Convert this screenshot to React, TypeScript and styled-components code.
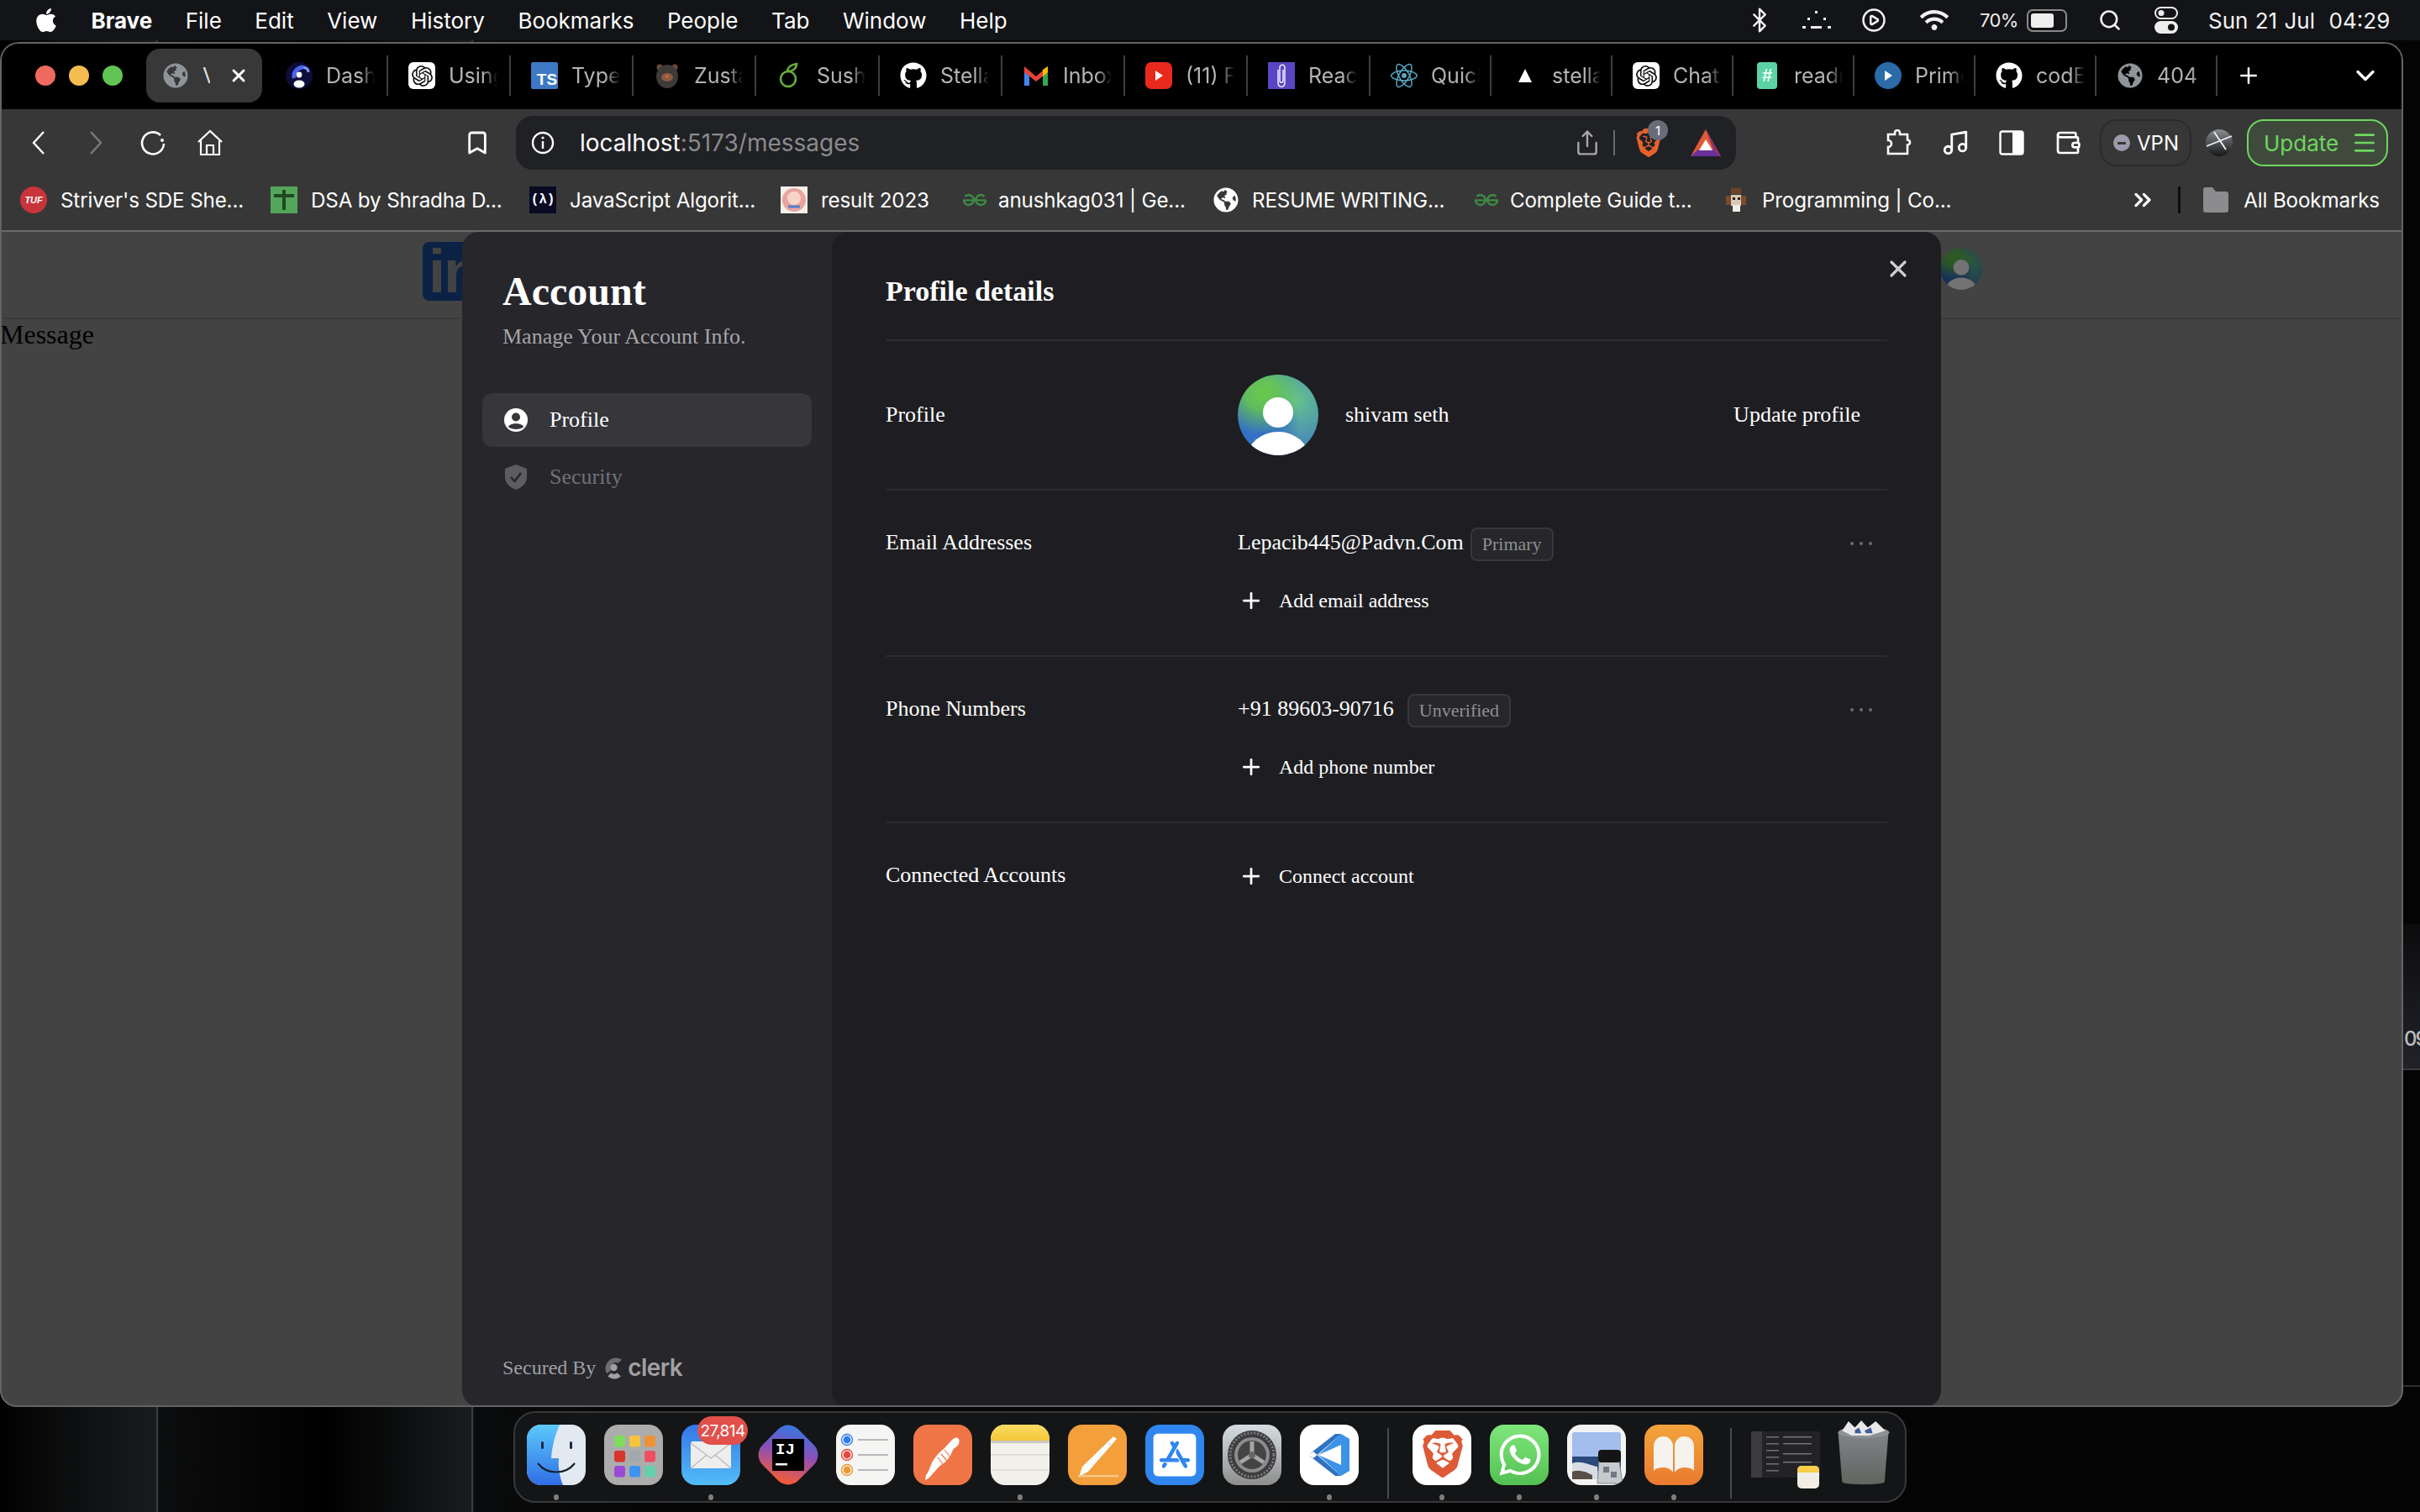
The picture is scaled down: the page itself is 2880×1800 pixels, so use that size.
import React from 'react';
import styled, { createGlobalStyle } from 'styled-components';
import { Bookmark, Share, Music, Wallet, Search, Bluetooth, CirclePlay, X, Plus, ChevronsRight, ChevronDown, Menu as MenuIcon } from 'lucide-react';
import { FaApple, FaGithub, FaGlobeAmericas, FaWifi, FaWhatsapp, FaAppStoreIos } from 'react-icons/fa';
import { SiBrave, SiOpenai, SiReact, SiGeeksforgeeks } from 'react-icons/si';

const sans = `Inter, "Liberation Sans", sans-serif`;
const serif = `"Liberation Serif", "Times New Roman", serif`;

const Global = createGlobalStyle`
  html, body { margin: 0; padding: 0; background: #000; width: 2880px; height: 1800px; overflow: hidden; }
  * { box-sizing: border-box; }
`;

const Desktop = styled.div`
  position: relative; width: 2880px; height: 1800px; overflow: hidden;
  display: flex; flex-direction: column; font-family: ${sans}; color: #fff;
  background:
    linear-gradient(90deg, transparent 186px, #3b3c3f 186px, #3b3c3f 188px, transparent 188px),
    linear-gradient(90deg, transparent 561px, #3b3c3f 561px, #3b3c3f 563px, transparent 563px),
    linear-gradient(90deg, #000 0, #0e0f10 90px, #191b1e 186px, #0c0d0e 190px, #000 390px, #0c0d0e 470px, #1a1c1f 561px, #0a0b0c 566px, #060606 800px, #040404 100%);
`;

const BehindStrip = styled.div`
  position: absolute; right: 0; top: 1100px; width: 22px; height: 174px; overflow: hidden;
  background: linear-gradient(180deg, #0c0c0e, #212329); border-bottom: 2px solid #3a3b3e;
  font-size: 24px; font-weight: 500; color: #bdbdbd; padding: 119px 0 0 3px; line-height: 36px; letter-spacing: -2px;
`;
const BehindLine = styled.div`
  position: absolute; right: 0; top: 1649px; width: 22px; height: 2px; background: #2b2c30;
`;

/* menu bar */
const MenuBar = styled.header`
  height: 48px; flex: none; display: flex; align-items: center; justify-content: space-between;
  background: #131417; padding: 0 37px 0 41px; font-size: 26px; position: relative;
`;
const MenuLeft = styled.nav`
  display: flex; align-items: center; gap: 39.5px;
`;
const AppleSlot = styled.span`
  display: flex; width: 28px; color: #fff;
`;
const MenuItem = styled.span<{ $bold?: boolean }>`
  font-weight: ${p => (p.$bold ? 700 : 400)}; white-space: nowrap;
`;
const StatusGroup = styled.div`
  display: flex; align-items: center;
`;
const Slot = styled.span<{ $w: number }>`
  width: ${p => p.$w}px; display: flex; justify-content: center; align-items: center; color: #f2f2f2;
`;
const Percent = styled.span`
  font-size: 22px; width: 46px; margin-left: 17px; white-space: nowrap; color: #eee; letter-spacing: -0.6px;
`;
const Battery = styled.span`
  width: 48px; height: 27px; margin-left: 10px; margin-right: 18px; border: 2px solid #8a8a8a; border-radius: 7px; padding: 3px; display: flex;
  i { display: block; width: 70%; background: #eee; border-radius: 3px; }
`;
const DateText = styled.span`
  margin-left: 16px; white-space: nowrap; font-size: 26px; width: 215px; word-spacing: 1px; color: #f2f2f2;
`;

/* window */
const BrowserWindow = styled.main`
  position: relative; margin-top: 2px; width: 2860px; height: 1625px; flex: none; overflow: hidden;
  border-radius: 22px 22px 20px 20px; display: flex; flex-direction: column; background: #434343;
  &::after { content: ''; position: absolute; inset: 0; border: 2px solid #646464; border-radius: inherit; pointer-events: none; z-index: 5; }
`;

const TabStrip = styled.div`
  height: 80px; flex: none; background: #000; display: flex; align-items: center; padding-left: 42px;
`;
const Light = styled.span<{ $c: string }>`
  width: 24px; height: 24px; border-radius: 50%; background: ${p => p.$c}; margin-right: 16px; flex: none;
`;
const ActiveTab = styled.div`
  width: 138px; height: 64px; margin-left: 12px; margin-right: 4px; flex: none; background: #383838; border-radius: 16px;
  display: flex; align-items: center; padding-left: 20px; color: #9aa0a6;
`;
const ActiveTitle = styled.span`
  width: 9px; overflow: hidden; margin-left: 17px; font-size: 25px; color: #ddd; white-space: nowrap;
`;
const ActiveClose = styled.span`
  display: flex; margin-left: 22px; color: #fff;
`;
const Tab = styled.div<{ $w: number }>`
  width: ${p => p.$w}px; height: 48px; flex: none; display: flex; align-items: center; padding-left: 24px;
`;
const Favicon = styled.span<{ $bg?: string; $fg?: string; $r?: number }>`
  width: 32px; height: 32px; flex: none; display: flex; align-items: center; justify-content: center; overflow: hidden;
  background: ${p => p.$bg || 'transparent'}; color: ${p => p.$fg || '#fff'}; border-radius: ${p => p.$r ?? 0}px;
`;
const TabTitle = styled.span`
  margin-left: 16px; width: 58px; overflow: hidden; white-space: nowrap; font-size: 25px; color: #b4b4b4;
  -webkit-mask-image: linear-gradient(90deg, #000 70%, transparent 100%);
  mask-image: linear-gradient(90deg, #000 70%, transparent 100%);
`;
const TabSep = styled.i`
  width: 2px; height: 48px; background: #3e3e3e; margin-left: auto; flex: none;
`;
const StripAction = styled.span<{ $ml: number }>`
  display: flex; margin-left: ${p => p.$ml}px; color: #fff;
`;

const Toolbar = styled.div`
  height: 72px; flex: none; background: #373737; padding: 8px 0 0 12px; display: flex; align-items: center;
`;
const ToolBtn = styled.span<{ $w?: number; $ml?: number; $dim?: boolean }>`
  width: ${p => p.$w ?? 68}px; margin-left: ${p => p.$ml ?? 0}px; height: 64px; flex: none;
  display: flex; align-items: center; justify-content: center; color: ${p => (p.$dim ? '#7c7c7c' : '#fff')};
`;
const UrlBar = styled.div`
  width: 1452px; height: 64px; margin-left: 12px; flex: none; background: #202125; border-radius: 20px;
  display: flex; align-items: center; padding-left: 18px; position: relative;
`;
const UrlText = styled.span`
  margin-left: 30px; font-size: 28px; color: #8a8a8c; white-space: nowrap;
  b { font-weight: 400; color: #fff; }
`;
const UrlActions = styled.span`
  margin-left: auto; display: flex; align-items: center; color: #a8a8a8;
`;
const UrlDivider = styled.i`
  width: 2px; height: 30px; background: #6a6a6a; margin: 0 22px 0 15px;
`;
const ShieldWrap = styled.span`
  position: relative; display: flex; width: 36px; justify-content: center; margin-right: 32px;
`;
const ShieldBadge = styled.span`
  position: absolute; left: 17px; top: -10px; width: 24px; height: 24px; border-radius: 50%; background: #6a6b78;
  color: #fff; font-size: 15px; display: flex; align-items: center; justify-content: center;
`;
const BatWrap = styled.span`
  display: flex; margin-right: 18px;
`;
const VpnPill = styled.span`
  width: 109px; height: 56px; margin-left: 5px; flex: none; border: 2px solid #2b2b2b; border-radius: 20px;
  display: flex; align-items: center; padding-left: 14px; gap: 8px; font-size: 24px; color: #fff;
`;
const VpnDot = styled.i`
  width: 20px; height: 20px; border-radius: 50%; background: #9b9bab; display: flex; align-items: center; justify-content: center;
  &::after { content: ''; width: 10px; height: 3px; background: #373737; }
`;
const UpdateBtn = styled.span`
  width: 168px; height: 56px; flex: none; border: 2px solid #6fd65f; border-radius: 20px; background: #3f4a3d;
  display: flex; align-items: center; justify-content: space-between; padding: 0 10px 0 18px; color: #6fd65f; font-size: 26px;
`;

const BookmarkBar = styled.div`
  height: 74px; flex: none; background: #373737; border-bottom: 2px solid #6a6a6a; display: flex; align-items: center;
  padding: 0 28px 0 24px; gap: 34px;
`;
const BookmarkItem = styled.span<{ $w: number; $gap: number }>`
  display: flex; align-items: center; gap: ${p => p.$gap}px; flex: none; width: ${p => p.$w}px;
  font-size: 24.2px; white-space: nowrap; color: #fff; letter-spacing: -0.15px;
`;
const BookmarkEnd = styled.span`
  margin-left: auto; display: flex; align-items: center; font-size: 24.2px; white-space: nowrap; color: #fff; letter-spacing: -0.15px;
`;
const BlackDivider = styled.i`
  width: 3px; height: 32px; background: #0d0d0d; margin: 0 27px 0 26px;
`;
const FolderWrap = styled.span`
  display: flex; margin-right: 18px;
`;

/* page */
const Content = styled.div`
  position: relative; flex: 1; background: #434343; min-height: 0;
`;
const PageHeader = styled.div`
  height: 104px; border-bottom: 2px solid #3a3a3a; display: flex; justify-content: space-between; align-items: flex-start;
  padding: 12px 501px 0 503px;
`;
const LinkedIn = styled.div`
  width: 70px; height: 70px; background: #0b2245; border-radius: 8px; color: #434343; font: 700 72px/70px "Liberation Sans", sans-serif;
  padding-left: 7px; overflow: hidden; letter-spacing: -2px;
`;
const PageText = styled.div`
  font-family: ${serif}; font-size: 32px; line-height: 37px; color: #000;
`;

const Modal = styled.section`
  position: absolute; left: 550px; top: 0; bottom: 0; width: 1760px; display: grid; grid-template-columns: 440px 1fr;
  background: #26262b; border-radius: 20px; overflow: hidden; font-family: ${serif}; z-index: 2; color: #fff;
`;
const Sidebar = styled.aside`
  display: flex; flex-direction: column; padding-top: 43px;
`;
const SideTitle = styled.h1`
  margin: 0 0 8px 48px; font-size: 48px; line-height: 56px; font-weight: 700;
`;
const SideSub = styled.p`
  margin: 0 0 49px 48px; font-size: 26px; line-height: 36px; color: #a5a5a8;
`;
const NavItem = styled.div<{ $active?: boolean }>`
  margin: 0 24px 4px; height: 64px; border-radius: 12px; display: flex; align-items: center; gap: 26px; padding-left: 26px;
  font-size: 26px; background: ${p => (p.$active ? '#36363b' : 'transparent')}; color: ${p => (p.$active ? '#fff' : '#727276')};
`;
const SideFooter = styled.div`
  margin-top: auto; padding: 0 0 29px 48px; display: flex; align-items: center; font-size: 24px; line-height: 36px; color: #a0a0a3;
`;
const ClerkMark = styled.span`
  display: flex; margin-left: 9px; margin-right: 4px;
`;
const ClerkWord = styled.span`
  font: 600 28px/36px ${sans}; color: #a0a0a3; letter-spacing: -0.6px;
`;

const MainPanel = styled.div`
  background: #1e1e22; border-radius: 20px; padding: 49px 64px 0; position: relative;
`;
const CloseBtn = styled.span`
  position: absolute; top: 28px; right: 35px; display: flex; color: #cfcfcf;
`;
const PanelTitle = styled.h2`
  margin: 0; font-size: 34px; line-height: 44px; font-weight: 700; padding-bottom: 35px; border-bottom: 2px solid #2c2c30;
`;
const Row = styled.div<{ $top: number; $h: number; $last?: boolean }>`
  display: grid; grid-template-columns: 419px 1fr; height: ${p => p.$h}px; padding-top: ${p => p.$top}px;
  border-bottom: ${p => (p.$last ? 'none' : '2px solid #2c2c30')};
`;
const RowLabel = styled.div<{ $mt?: number }>`
  font-size: 26px; line-height: 36px; margin-top: ${p => p.$mt ?? 0}px;
`;
const ProfileValue = styled.div`
  display: flex; align-items: flex-start;
`;
const Avatar = styled.div<{ $size: number; $dim?: boolean }>`
  width: ${p => p.$size}px; height: ${p => p.$size}px; border-radius: 50%; overflow: hidden; flex: none;
  margin-top: ${p => (p.$dim ? 7 : 0)}px; filter: ${p => (p.$dim ? 'brightness(.45)' : 'none')};
  background:
    radial-gradient(circle at 30% 25%, #68c94a 0, rgba(104,201,74,.85) 18%, rgba(104,201,74,0) 48%),
    radial-gradient(circle at 22% 65%, #3470c4 0, #3470c4 22%, rgba(52,112,196,0) 55%),
    radial-gradient(circle at 72% 32%, #65c38d 0, rgba(101,195,141,0) 50%),
    #4b8fb4;
  svg { display: block; width: 100%; height: 100%; }
`;
const ProfileName = styled.div`
  margin-left: 32px; font-size: 26px; line-height: 96px;
`;
const UpdateLink = styled.div`
  margin-left: auto; margin-right: 32px; font-size: 26px; line-height: 96px;
`;
const ValueLine = styled.div`
  display: flex; align-items: flex-start; position: relative;
`;
const ValueText = styled.span`
  font-size: 26px; line-height: 36px; white-space: nowrap;
`;
const Badge = styled.span<{ $ml: number }>`
  margin-left: ${p => p.$ml}px; height: 40px; padding: 0 12px; display: flex; align-items: center; font-size: 22px; color: #8f8f93;
  border: 2px solid #38383c; border-radius: 8px; background: #27272b; white-space: nowrap;
`;
const Dots = styled.span`
  margin-left: auto; margin-right: 18px; margin-top: 17px; display: flex; gap: 7px;
  i { width: 4px; height: 4px; border-radius: 50%; background: #6d6d71; }
`;
const AddRow = styled.div<{ $mt: number }>`
  display: flex; align-items: center; height: 44px; margin-top: ${p => p.$mt}px; padding-left: 1px; gap: 18px; font-size: 24px; white-space: nowrap;
`;

/* dock */
const Dock = styled.footer`
  align-self: center; margin-top: 5px; height: 109px; width: 1658px; flex: none; display: flex; align-items: flex-start; position: relative; z-index: 3;
  padding: 14px 0 0 14px; gap: 22px; border: 2px solid #37383a; border-radius: 26px; background: #141516;
`;
const DockItem = styled.div<{ $w?: number; $ml?: number }>`
  width: ${p => p.$w ?? 70}px; margin-left: ${p => p.$ml ?? 0}px; flex: none; display: flex; flex-direction: column; align-items: center; position: relative;
  svg { display: block; }
`;
const DockDot = styled.i`
  width: 6px; height: 7px; border-radius: 50%; background: #7d7d7d; margin-top: 11px;
`;
const DockSep = styled.i<{ $r: number; $l: number }>`
  width: 2px; height: 84px; background: #4a4a4c; margin: 4px ${p => p.$r}px 0 ${p => p.$l}px; flex: none;
`;
const MailBadge = styled.span`
  position: absolute; left: 19px; top: -10px; width: 60px; height: 34px; border-radius: 17px; background: #e1504a; color: #fff;
  font-size: 19px; display: flex; align-items: center; justify-content: center; letter-spacing: -0.6px;
`;
const TsText = styled.span`
  font: 700 19px/1 "Liberation Sans", sans-serif; color: #fff; margin: 9px 0 0 6px;
`;
const ReadmeText = styled.span`
  width: 24px; height: 32px; background: #5bd3a4; border-radius: 4px; color: #e8fff4; font: 700 22px/32px "Liberation Sans", sans-serif; text-align: center;
`;
const TufText = styled.span`
  font: italic 700 11px/1 "Liberation Sans", sans-serif; color: #fff;
`;
const FccText = styled.span`
  font: 700 16px/1 "Liberation Mono", monospace; color: #fff;
`;

const Tile = ({ children, bg = '#fff', defs }: { children?: React.ReactNode; bg?: string; defs?: React.ReactNode }) => (
  <svg width="70" height="72" viewBox="0 0 70 72">
    {defs && <defs>{defs}</defs>}
    <clipPath id="tc"><rect width="70" height="72" rx="17" /></clipPath>
    <g clipPath="url(#tc)">
      <rect width="70" height="72" fill={bg} />
      {children}
    </g>
  </svg>
);

const Finder = () => (
  <Tile bg="#e3e9f1" defs={<linearGradient id="fb" x1="0" y1="0" x2="0" y2="1"><stop offset="0" stopColor="#5cc9fb" /><stop offset="1" stopColor="#2f6ee6" /></linearGradient>}>
    <path d="M0 0H39C33 14 30 26 29 40H38C37 50 39 62 43 72H0Z" fill="url(#fb)" />
    <rect x="17" y="20" width="3" height="9" rx="1.5" fill="#1d2a44" /><rect x="51" y="20" width="3" height="9" rx="1.5" fill="#1d2a44" />
    <path d="M13 46C24 60 46 60 57 46" stroke="#16202e" strokeWidth="2.2" fill="none" />
  </Tile>
);
const Launchpad = () => {
  const c = ['#7fdc5a', '#f6c33c', '#ee9233', '#d8352b', '#a3a8ac', '#ee4f63', '#9a4ad6', '#3d93f2', '#63d0ac'];
  return (
    <Tile bg="#acacac">
      {c.map((f, i) => <rect key={f} x={12 + (i % 3) * 18} y={13 + Math.floor(i / 3) * 18} width="13" height="13.5" rx="3" fill={f} />)}
    </Tile>
  );
};
const Mail = () => (
  <Tile defs={<linearGradient id="mb" x1="0" y1="0" x2="0" y2="1"><stop offset="0" stopColor="#3477e8" /><stop offset="1" stopColor="#52bdf7" /></linearGradient>} bg="url(#mb)">
    <rect x="11" y="20" width="48" height="32" rx="2.5" fill="#eeeeee" />
    <path d="M11 22L35 40L59 22M11 52L30 36M59 52L40 36" stroke="#b9b9b9" strokeWidth="1.2" fill="none" />
  </Tile>
);
const Idea = () => (
  <svg width="78" height="78" viewBox="0 0 78 78" style={{ marginTop: -3 }}>
    <defs><linearGradient id="ij" x1="0.1" y1="0" x2="0.7" y2="1"><stop offset="0" stopColor="#2d7be8" /><stop offset="0.5" stopColor="#8a4fb8" /><stop offset="1" stopColor="#f25b3a" /></linearGradient></defs>
    <rect x="9" y="9" width="60" height="60" rx="17" fill="url(#ij)" transform="rotate(45 39 39)" />
    <rect x="20" y="20" width="38" height="38" fill="#000" />
    <text x="24" y="38" fontFamily='"Liberation Mono", monospace' fontWeight="700" fontSize="19" fill="#fff">IJ</text>
    <rect x="24" y="49" width="14" height="2.5" fill="#fff" />
  </svg>
);
const Reminders = () => (
  <Tile bg="#f5f5f3">
    {[['#2f7cf0', 17], ['#e5483d', 35], ['#ea9a30', 53]].map(([c, y]) => (
      <g key={String(c)}>
        <circle cx="13" cy={Number(y) + 1} r="6.5" fill="none" stroke={String(c)} strokeWidth="1.4" /><circle cx="13" cy={Number(y) + 1} r="4.4" fill={String(c)} />
        <rect x="26" y={Number(y)} width="36" height="2" fill="#b9b9bb" />
      </g>
    ))}
  </Tile>
);
const Postman = () => (
  <Tile bg="#ef7547">
    <path d="M49 16C53 14 56 18 54 23C52 27 49 27 47 30C44 38 40 44 33 48C28 52 24 58 18 64L14 66L15 60C19 56 20 48 24 42C28 36 32 32 37 28C41 24 44 19 49 16Z" fill="#fff" />
    <path d="M37 30L44 39M33 35L40 43M29 39L35 47" stroke="#ef7547" strokeWidth="1.2" />
  </Tile>
);
const Notes = () => (
  <Tile bg="#f1f0ea" defs={<linearGradient id="nb" x1="0" y1="0" x2="0" y2="1"><stop offset="0" stopColor="#f9dc62" /><stop offset="1" stopColor="#f5c73b" /></linearGradient>}>
    <rect width="70" height="19" fill="url(#nb)" />
    <rect y="19" width="70" height="3" fill="#c9c8c1" />
    <rect y="35" width="70" height="1.6" fill="#dbdad4" /><rect y="53" width="70" height="1.6" fill="#dbdad4" />
  </Tile>
);
const Pages = () => (
  <Tile bg="#f29f3c">
    <path d="M54 14L58 17L24 56L13 62L17 50Z" fill="#fbfbf8" />
    <path d="M48 22L52 25" stroke="#d9d9d4" strokeWidth="1.5" />
    <rect x="12" y="60" width="48" height="2.4" fill="#f8c88c" />
  </Tile>
);
const AppStore = () => (
  <Tile bg="#2f86ee"><foreignObject x="6" y="7" width="58" height="58"><FaAppStoreIos size={58} color="#fff" /></foreignObject></Tile>
);
const Settings = () => (
  <Tile defs={<linearGradient id="sb" x1="0" y1="0" x2="0" y2="1"><stop offset="0" stopColor="#d5dde1" /><stop offset="1" stopColor="#8e8e8e" /></linearGradient>} bg="url(#sb)">
    <circle cx="35" cy="36" r="29" fill="#3d3d3f" /><circle cx="35" cy="36" r="21" fill="#8d8d90" /><circle cx="35" cy="36" r="17" fill="#444" />
    <path d="M35 36V20M35 36L21 45M35 36L49 45" stroke="#a5a5a8" strokeWidth="5" /><circle cx="35" cy="36" r="4" fill="#666" />
    <circle cx="35" cy="36" r="26" fill="none" stroke="#7c7c7e" strokeWidth="3" strokeDasharray="2 2" />
  </Tile>
);
const VsCode = () => (
  <Tile bg="#fff">
    <path d="M49 11L59 17V55L49 61L22 36Z" fill="#3c92e6" />
    <path d="M49 11L16 40L10 36L42 11Z M49 61L16 32L10 36L42 61Z" fill="#2f72c0" />
    <path d="M49 24V48L22 36Z" fill="#fff" />
  </Tile>
);
const BraveTile = () => (
  <Tile bg="#fff"><foreignObject x="8" y="7" width="54" height="58"><SiBrave size={56} color="#dd5a36" /></foreignObject></Tile>
);
const WhatsTile = () => (
  <Tile defs={<linearGradient id="wb" x1="0" y1="0" x2="0" y2="1"><stop offset="0" stopColor="#7fe67c" /><stop offset="1" stopColor="#54c153" /></linearGradient>} bg="url(#wb)">
    <foreignObject x="8" y="8" width="56" height="56"><FaWhatsapp size={56} color="#fff" /></foreignObject>
  </Tile>
);
const Preview = () => (
  <Tile bg="#f3f3f3">
    <rect x="6" y="9" width="58" height="56" rx="3" fill="#a3bdec" />
    <rect x="6" y="38" width="58" height="17" fill="#2a4a7c" />
    <path d="M6 46C16 42 26 48 36 50V65H6Z" fill="#d7dde4" />
    <path d="M6 56C14 53 22 56 30 60V65H6Z" fill="#5a4f46" />
    <path d="M38 44H62L66 70H36Z" fill="#c4cace" stroke="#888" strokeWidth="1" />
    <rect x="43" y="50" width="7" height="7" fill="#6f7a85" /><rect x="52" y="56" width="7" height="7" fill="#6f7a85" />
    <rect x="37" y="30" width="27" height="15" rx="4" fill="#141414" />
  </Tile>
);
const Books = () => (
  <Tile defs={<linearGradient id="bb" x1="0" y1="0" x2="0" y2="1"><stop offset="0" stopColor="#f3a33c" /><stop offset="1" stopColor="#ea7a2f" /></linearGradient>} bg="url(#bb)">
    <path d="M11 55V27C11 18 16 14 23 14C29 14 33 19 34 24V57C31 52 26 51 22 51C17 51 14 52 11 55Z" fill="#f6f2ee" />
    <path d="M59 55V27C59 18 54 14 47 14C41 14 37 19 36 24V57C39 52 44 51 48 51C53 51 56 52 59 55Z" fill="#f6f2ee" />
  </Tile>
);
const Stack = () => (
  <svg width="83" height="78" viewBox="0 0 83 78">
    <rect x="0" y="8" width="82" height="55" fill="#232325" />
    <rect x="0" y="8" width="13" height="55" fill="#3c3c3e" />
    {[14, 22, 30, 38, 46, 54].map(y => <rect key={y} x="18" y={y} width="15" height="1.6" fill="#6d6d6f" />)}
    {[14, 22, 34, 44].map(y => <rect key={y} x="38" y={y} width="34" height="1.4" fill="#7a7a7c" />)}
    <rect x="55" y="49" width="26" height="27" rx="5" fill="#f1efe5" />
    <path d="M55 54a5 5 0 0 1 5-5h16a5 5 0 0 1 5 5v3H55Z" fill="#f7cd49" />
  </svg>
);
const Trash = () => (
  <svg width="66" height="80" viewBox="0 0 66 84" style={{ marginTop: -6 }}>
    <defs><linearGradient id="tr" x1="0" y1="0" x2="0" y2="1"><stop offset="0" stopColor="#80848a" /><stop offset="1" stopColor="#62645f" /></linearGradient></defs>
    <path d="M1 16L6 78C7 82 58 82 59 78L64 16Z" fill="url(#tr)" />
    <ellipse cx="33" cy="16" rx="32" ry="7" fill="#8d9191" />
    <path d="M6 14L14 2L22 10L30 1L38 10L48 2L60 14L40 20H18Z" fill="#e8e8e8" />
    <path d="M22 13L27 10L30 17H22ZM34 14L42 10L44 17H36Z" fill="#3b5b9b" />
  </svg>
);

const Lion = ({ size, color }: { size: number; color: string }) => <SiBrave size={size} color={color} />;
const Globe = ({ c = '#8f949a', s = 30 }: { c?: string; s?: number }) => <FaGlobeAmericas size={s} color={c} />;

const GptFav = () => <Favicon $bg="#fff" $r={6} $fg="#111"><SiOpenai size={25} /></Favicon>;

const tabs: { t: string; w: number; i: React.ReactNode }[] = [
  { t: 'Dash', w: 146, i: <Favicon $bg="#0d0d3a" $r={16}><svg width="32" height="32" viewBox="0 0 32 32"><path d="M21 6A11 11 0 0 0 10 19" stroke="#4a64f0" strokeWidth="5" fill="none" /><path d="M21 6C26 7 27 10 27 12" stroke="#7f9cf8" strokeWidth="3" fill="none" /><circle cx="16" cy="15" r="3.4" fill="#fff" /><ellipse cx="16" cy="26" rx="6.5" ry="4.5" fill="#fff" /></svg></Favicon> },
  { t: 'Using', w: 146, i: <GptFav /> },
  { t: 'TypeS', w: 146, i: <Favicon $bg="#3e78c4" $r={2}><TsText>TS</TsText></Favicon> },
  { t: 'Zusta', w: 146, i: <Favicon><svg width="32" height="32" viewBox="0 0 32 32"><circle cx="7" cy="6" r="3.5" fill="#6b4b3a" /><circle cx="25" cy="6" r="3.5" fill="#6b4b3a" /><ellipse cx="16" cy="17" rx="13" ry="14" fill="#3d3a38" /><ellipse cx="16" cy="18" rx="7" ry="5" fill="#8a5a44" /><circle cx="16" cy="17" r="2" fill="#c7653a" /></svg></Favicon> },
  { t: 'Sush', w: 147, i: <Favicon><svg width="32" height="32" viewBox="0 0 32 32" fill="none" stroke="#67ad3c" strokeWidth="2.6"><circle cx="14" cy="20" r="9" /><path d="M13 11C13 5 18 3 24 2C24 7 20 11 13 11Z" /></svg></Favicon> },
  { t: 'Stella', w: 146, i: <Favicon><FaGithub size={32} /></Favicon> },
  { t: 'Inbox', w: 146, i: <Favicon><svg width="32" height="32" viewBox="0 0 32 32"><path d="M2 8V28H8V14Z" fill="#4285f4" /><path d="M30 8V28H24V14Z" fill="#34a853" /><path d="M2 5L16 17L30 5V12L16 23L2 12Z" fill="#ea4335" /><path d="M30 5V12L24 17V9Z" fill="#fbbc04" /></svg></Favicon> },
  { t: '(11) F', w: 146, i: <Favicon $bg="#e8291c" $r={7}><svg width="14" height="14" viewBox="0 0 14 14"><path d="M3 1L12 7L3 13Z" fill="#fff" /></svg></Favicon> },
  { t: 'React', w: 146, i: <Favicon $bg="#5a45c4"><svg width="32" height="32" viewBox="0 0 32 32" fill="none" stroke="#e4e4f8" strokeWidth="1.6"><path d="M12 9V24C12 31 20 31 20 24V7C20 2 14 2 14 7V22C14 25 18 25 18 22V9" /></svg></Favicon> },
  { t: 'Quick', w: 144, i: <Favicon $fg="#57a9c4"><SiReact size={32} /></Favicon> },
  { t: 'stella', w: 144, i: <Favicon><svg width="16" height="16" viewBox="0 0 18 18"><path d="M9 0L18 18H0Z" fill="#fff" /></svg></Favicon> },
  { t: 'Chat', w: 144, i: <GptFav /> },
  { t: 'readr', w: 144, i: <Favicon><ReadmeText>#</ReadmeText></Favicon> },
  { t: 'Prime', w: 144, i: <Favicon $bg="#2a6ba8" $r={16}><svg width="14" height="14" viewBox="0 0 14 14"><path d="M3 1L12 7L3 13Z" fill="#fff" /></svg></Favicon> },
  { t: 'codE', w: 144, i: <Favicon><FaGithub size={32} /></Favicon> },
  { t: '404', w: 144, i: <Favicon><Globe /></Favicon> },
];

const Gfg = () => <SiGeeksforgeeks size={28} color="#3d8b45" />;
const marks: { t: string; w: number; g: number; i: React.ReactNode }[] = [
  { t: "Striver's SDE She...", w: 264, g: 16, i: <Favicon $bg="#c9343a" $r={16}><TufText>TUF</TufText></Favicon> },
  { t: 'DSA by Shradha D...', w: 274, g: 16, i: <Favicon $bg="#54a65b"><svg width="32" height="32" viewBox="0 0 32 32"><path d="M14 4H18V28H14ZM4 9H28V13H4Z" fill="#1f4a25" /></svg></Favicon> },
  { t: 'JavaScript Algorit...', w: 265, g: 16, i: <Favicon $bg="#0a0a23"><FccText>(λ)</FccText></Favicon> },
  { t: 'result 2023', w: 181, g: 16, i: <Favicon $bg="#f3efe9"><svg width="32" height="32" viewBox="0 0 32 32"><circle cx="16" cy="16" r="14" fill="#e9a4a0" /><circle cx="16" cy="14" r="8" fill="#f5d5c8" /><path d="M9 24H23" stroke="#4f7fc9" strokeWidth="3" /></svg></Favicon> },
  { t: 'anushkag031 | Ge...', w: 265, g: 12, i: <Favicon><Gfg /></Favicon> },
  { t: 'RESUME WRITING...', w: 276, g: 15, i: <Favicon><Globe c="#fff" /></Favicon> },
  { t: 'Complete Guide t...', w: 263, g: 12, i: <Favicon><Gfg /></Favicon> },
  { t: 'Programming | Co...', w: 267, g: 15, i: <Favicon><svg width="32" height="32" viewBox="0 0 32 32"><rect x="10" y="2" width="12" height="7" fill="#6d4326" /><rect x="4" y="11" width="24" height="11" fill="#7a4b2a" /><rect x="10" y="10" width="12" height="13" fill="#d9c9b8" /><rect x="12" y="22" width="9" height="8" fill="#f0ece6" /><rect x="12" y="13" width="3" height="3" fill="#222" /><rect x="18" y="13" width="3" height="3" fill="#222" /></svg></Favicon> },
];

const dockA: { k: string; c: React.ReactNode; dot?: boolean; badge?: string }[] = [
  { k: 'finder', c: <Finder />, dot: true },
  { k: 'launch', c: <Launchpad /> },
  { k: 'mail', c: <Mail />, dot: true, badge: '27,814' },
  { k: 'idea', c: <Idea /> },
  { k: 'rem', c: <Reminders /> },
  { k: 'post', c: <Postman /> },
  { k: 'notes', c: <Notes />, dot: true },
  { k: 'pages', c: <Pages /> },
  { k: 'store', c: <AppStore /> },
  { k: 'set', c: <Settings /> },
  { k: 'code', c: <VsCode />, dot: true },
];
const dockB = [
  { k: 'brave', c: <BraveTile /> },
  { k: 'wa', c: <WhatsTile /> },
  { k: 'prev', c: <Preview /> },
  { k: 'books', c: <Books /> },
];

const Person = () => (
  <svg viewBox="0 0 96 96"><circle cx="48" cy="45" r="18" fill="#fff" /><ellipse cx="48" cy="100" rx="37" ry="32" fill="#fff" /></svg>
);

const AddAction = ({ label, mt }: { label: string; mt: number }) => (
  <AddRow $mt={mt}><Plus size={30} strokeWidth={2.2} />{label}</AddRow>
);

export default function App() {
  return (
    <Desktop>
      <Global />
      <BehindStrip>09</BehindStrip>
      <BehindLine />
      <MenuBar>
        <MenuLeft>
          <AppleSlot><FaApple size={32} /></AppleSlot>
          <MenuItem $bold>Brave</MenuItem>
          {['File', 'Edit', 'View', 'History', 'Bookmarks', 'People', 'Tab', 'Window', 'Help'].map(m => <MenuItem key={m}>{m}</MenuItem>)}
        </MenuLeft>
        <StatusGroup>
          <Slot $w={68}><Bluetooth size={32} strokeWidth={1.8} /></Slot>
          <Slot $w={67}><svg width="36" height="24" viewBox="0 0 36 24" fill="#eee"><rect x="16" y="1" width="3" height="3" /><rect x="7" y="9" width="3" height="3" /><rect x="26" y="9" width="3" height="3" /><rect x="1" y="19" width="4" height="3" /><rect x="11" y="19" width="13" height="3" /><rect x="31" y="19" width="4" height="3" /></svg></Slot>
          <Slot $w={70}><CirclePlay size={30} strokeWidth={2} /></Slot>
          <Slot $w={74}><FaWifi size={34} /></Slot>
          <Percent>70%</Percent>
          <Battery><i /></Battery>
          <Slot $w={66}><Search size={28} strokeWidth={2.2} /></Slot>
          <Slot $w={68}><svg width="28" height="32" viewBox="0 0 28 32"><rect x="1" y="1" width="26" height="13" rx="6.5" fill="none" stroke="#eee" strokeWidth="2" /><circle cx="8" cy="7.5" r="3.5" fill="#eee" /><rect x="0" y="17" width="28" height="15" rx="7.5" fill="#eee" /><circle cx="20" cy="24.5" r="4" fill="#131417" /></svg></Slot>
          <DateText>{'Sun 21 Jul\u00A0\u00A004:29'}</DateText>
        </StatusGroup>
      </MenuBar>

      <BrowserWindow>
        <TabStrip>
          <Light $c="#ee6a5f" /><Light $c="#f5bd4f" /><Light $c="#61c554" />
          <ActiveTab>
            <Globe />
            <ActiveTitle>V</ActiveTitle>
            <ActiveClose><X size={24} strokeWidth={3} /></ActiveClose>
          </ActiveTab>
          {tabs.map(t => (
            <Tab key={t.t} $w={t.w}>
              {t.i}
              <TabTitle>{t.t}</TabTitle>
              <TabSep />
            </Tab>
          ))}
          <StripAction $ml={22}><Plus size={30} strokeWidth={2} /></StripAction>
          <StripAction $ml={106}><ChevronDown size={36} strokeWidth={2.2} /></StripAction>
        </TabStrip>

        <Toolbar>
          <ToolBtn><svg width="16" height="28" viewBox="0 0 16 28" fill="none" stroke="currentColor" strokeWidth="2.4"><path d="M14 1L2 14L14 27" /></svg></ToolBtn>
          <ToolBtn $dim><svg width="16" height="28" viewBox="0 0 16 28" fill="none" stroke="currentColor" strokeWidth="2.4"><path d="M2 1L14 14L2 27" /></svg></ToolBtn>
          <ToolBtn><svg width="32" height="32" viewBox="0 0 32 32" fill="none" stroke="currentColor" strokeWidth="2.6"><path d="M25 7A13 13 0 1 0 29 17" /><circle cx="27" cy="13" r="2" fill="currentColor" stroke="none" /></svg></ToolBtn>
          <ToolBtn><svg width="32" height="32" viewBox="0 0 32 32" fill="none" stroke="currentColor" strokeWidth="2.2"><path d="M2 15L16 2L30 15M5 13V30H27V13" /><path d="M12 30V19H20V30" /></svg></ToolBtn>
          <ToolBtn $ml={250}><Bookmark size={32} strokeWidth={2.1} /></ToolBtn>
          <UrlBar>
            <svg width="28" height="28" viewBox="0 0 28 28" fill="none" stroke="#fff" strokeWidth="2.4"><circle cx="14" cy="14" r="12" /><path d="M14 12V21" /><circle cx="14" cy="8" r="1.6" fill="#fff" stroke="none" /></svg>
            <UrlText><b>localhost</b>:5173/messages</UrlText>
            <UrlActions>
              <Share size={32} strokeWidth={1.8} />
              <UrlDivider />
              <ShieldWrap><Lion size={34} color="#e8612c" /><ShieldBadge>1</ShieldBadge></ShieldWrap>
              <BatWrap><svg width="36" height="32" viewBox="0 0 36 32"><path d="M18 0L36 32H0Z" fill="#e05a35" /><path d="M0 32L9 24H27L36 32Z" fill="#6b2f9a" /><path d="M18 0L36 32L27 24Z" fill="#8d2f6d" /><path d="M18 12L26 25H10Z" fill="#fff" /></svg></BatWrap>
            </UrlActions>
          </UrlBar>
          <ToolBtn $w={67} $ml={160}><svg width="32" height="32" viewBox="0 0 32 32" fill="none" stroke="currentColor" strokeWidth="2.6"><path d="M3 6H11V4a3 3 0 0 1 6 0V6H26V12.5a3 3 0 0 1 0 6V29H3V21a4 4 0 0 0 0-8Z" /></svg></ToolBtn>
          <ToolBtn $w={67}><Music size={34} strokeWidth={2} /></ToolBtn>
          <ToolBtn $w={67}><svg width="30" height="30" viewBox="0 0 30 30"><rect x="1.5" y="1.5" width="27" height="27" rx="2.5" fill="none" stroke="#fff" strokeWidth="2.4" /><rect x="16" y="1.5" width="12.5" height="27" fill="#fff" /></svg></ToolBtn>
          <ToolBtn $w={67}><Wallet size={32} strokeWidth={2} /></ToolBtn>
          <VpnPill><VpnDot />VPN</VpnPill>
          <ToolBtn $w={66}><svg width="32" height="32" viewBox="0 0 32 32"><defs><linearGradient id="sph" x1="0" y1="0" x2="0" y2="1"><stop offset="0" stopColor="#8a8d92" /><stop offset="1" stopColor="#15161a" /></linearGradient></defs><circle cx="16" cy="16" r="16" fill="url(#sph)" /><path d="M1 20L31 8M10 3L24 24" stroke="#f2f2f2" strokeWidth="1.8" /></svg></ToolBtn>
          <UpdateBtn>Update<MenuIcon size={32} strokeWidth={2} /></UpdateBtn>
        </Toolbar>

        <BookmarkBar>
          {marks.map(m => <BookmarkItem key={m.t} $w={m.w} $gap={m.g}>{m.i}{m.t}</BookmarkItem>)}
          <BookmarkEnd>
            <ChevronsRight size={32} strokeWidth={2.4} />
            <BlackDivider />
            <FolderWrap><svg width="30" height="30" viewBox="0 0 30 30"><path d="M0 3a3 3 0 0 1 3-3h8l4 5H27a3 3 0 0 1 3 3V27a3 3 0 0 1-3 3H3a3 3 0 0 1-3-3Z" fill="#8c8c8e" /></svg></FolderWrap>
            All Bookmarks
          </BookmarkEnd>
        </BookmarkBar>

        <Content>
          <PageHeader>
            <LinkedIn>in</LinkedIn>
            <Avatar $size={50} $dim><Person /></Avatar>
          </PageHeader>
          <PageText>Message</PageText>

          <Modal>
            <Sidebar>
              <SideTitle>Account</SideTitle>
              <SideSub>Manage Your Account Info.</SideSub>
              <NavItem $active>
                <svg width="28" height="28" viewBox="0 0 28 28"><circle cx="14" cy="14" r="14" fill="#fff" /><circle cx="14" cy="10.5" r="5" fill="#36363b" /><path d="M5 22C7 17 21 17 23 22C20 26 8 26 5 22Z" fill="#36363b" /></svg>
                Profile
              </NavItem>
              <NavItem>
                <svg width="28" height="30" viewBox="0 0 28 30"><path d="M14 0L27 5V15C27 23 20 28 14 30C8 28 1 23 1 15V5Z" fill="#5c5c61" /><path d="M8 15L12.5 20L20 10" stroke="#26262b" strokeWidth="2.6" fill="none" /></svg>
                Security
              </NavItem>
              <SideFooter>
                Secured By
                <ClerkMark><svg width="25" height="30" viewBox="0 0 24 28"><path d="M21 5A12 12 0 0 0 4 21L9 17A6 6 0 0 1 17 9Z" fill="#6e6e72" /><circle cx="12" cy="14" r="4" fill="#a0a0a3" /><path d="M5 24C10 28 16 28 20 24L16 20C13 22 11 22 9 20Z" fill="#a0a0a3" /></svg></ClerkMark>
                <ClerkWord>clerk</ClerkWord>
              </SideFooter>
            </Sidebar>

            <MainPanel>
              <CloseBtn><X size={32} strokeWidth={2.4} /></CloseBtn>
              <PanelTitle>Profile details</PanelTitle>
              <Row $top={40} $h={178}>
                <RowLabel $mt={30}>Profile</RowLabel>
                <ProfileValue>
                  <Avatar $size={96}><Person /></Avatar>
                  <ProfileName>shivam seth</ProfileName>
                  <UpdateLink>Update profile</UpdateLink>
                </ProfileValue>
              </Row>
              <Row $top={44} $h={198}>
                <RowLabel>Email Addresses</RowLabel>
                <div>
                  <ValueLine>
                    <ValueText>Lepacib445@Padvn.Com</ValueText>
                    <Badge $ml={8}>Primary</Badge>
                    <Dots><i /><i /><i /></Dots>
                  </ValueLine>
                  <AddAction label="Add email address" mt={25} />
                </div>
              </Row>
              <Row $top={44} $h={198}>
                <RowLabel>Phone Numbers</RowLabel>
                <div>
                  <ValueLine>
                    <ValueText>+91 89603-90716</ValueText>
                    <Badge $ml={16}>Unverified</Badge>
                    <Dots><i /><i /><i /></Dots>
                  </ValueLine>
                  <AddAction label="Add phone number" mt={25} />
                </div>
              </Row>
              <Row $top={41} $h={120} $last>
                <RowLabel $mt={3}>Connected Accounts</RowLabel>
                <div><AddAction label="Connect account" mt={0} /></div>
              </Row>
            </MainPanel>
          </Modal>
        </Content>
      </BrowserWindow>

      <Dock>
        {dockA.map(d => (
          <DockItem key={d.k}>
            {d.c}
            {d.badge && <MailBadge>{d.badge}</MailBadge>}
            {d.dot && <DockDot />}
          </DockItem>
        ))}
        <DockSep $l={12} $r={6} />
        {dockB.map(d => (
          <DockItem key={d.k}>{d.c}<DockDot /></DockItem>
        ))}
        <DockSep $l={10} $r={1} />
        <DockItem $w={83}><Stack /></DockItem>
        <DockItem $w={66} $ml={-4}><Trash /></DockItem>
      </Dock>
    </Desktop>
  );
}
